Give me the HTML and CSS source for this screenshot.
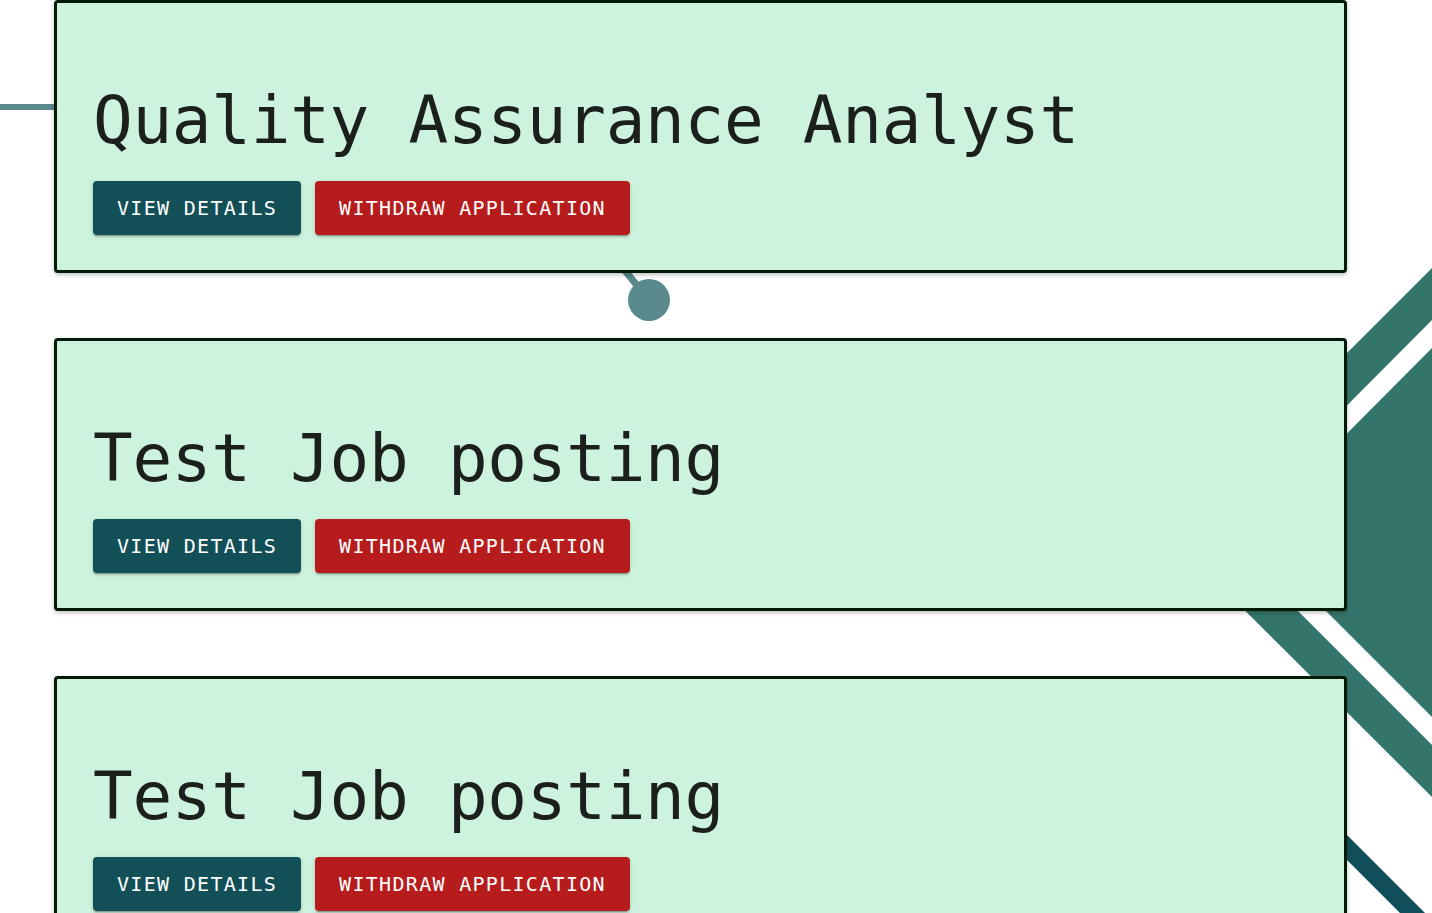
FILE: index.html
```html
<!DOCTYPE html>
<html lang="en">
<head>
<meta charset="utf-8">
<title>Applications</title>
<link rel="stylesheet" href="styles.css">
</head>
<body>
<svg class="decor" width="1432" height="913" viewBox="0 0 1432 913" aria-hidden="true">
  <line x1="0" y1="107" x2="80" y2="107" stroke="#5a8a8b" stroke-width="6"/>
  <line x1="590" y1="228" x2="649" y2="300" stroke="#5a8a8b" stroke-width="7"/>
  <circle cx="649" cy="300" r="21" fill="#5a8a8b"/>
  <polygon points="1432,268 1167,533 1432,797" fill="#34756b"/>
  <polygon points="1432,320 1220,533 1432,745" fill="#ffffff"/>
  <polygon points="1432,348 1248,533 1432,717" fill="#34756b"/>
  <polygon points="1250,738 1460,948 1460,973 1250,763" fill="#104f59"/>
</svg>
<main class="list">
  <section class="card">
    <h2 class="title">Quality Assurance Analyst</h2>
    <div class="actions">
      <button class="btn btn-view">View Details</button>
      <button class="btn btn-withdraw">Withdraw Application</button>
    </div>
  </section>
  <section class="card">
    <h2 class="title">Test Job posting</h2>
    <div class="actions">
      <button class="btn btn-view">View Details</button>
      <button class="btn btn-withdraw">Withdraw Application</button>
    </div>
  </section>
  <section class="card">
    <h2 class="title">Test Job posting</h2>
    <div class="actions">
      <button class="btn btn-view">View Details</button>
      <button class="btn btn-withdraw">Withdraw Application</button>
    </div>
  </section>
</main>
</body>
</html>
```
FILE: styles.css
```css
html, body {
  margin: 0;
  padding: 0;
  background: #ffffff;
  overflow: hidden;
  height: 913px;
}

body {
  position: relative;
  font-family: "DejaVu Sans Mono", "Liberation Mono", monospace;
}

.decor {
  position: absolute;
  left: 0;
  top: 0;
  z-index: 0;
}

.list {
  position: relative;
  z-index: 1;
  display: flex;
  flex-direction: column;
  gap: 65px;
  padding-left: 54px;
}

.card {
  width: 1293px;
  box-sizing: border-box;
  background: #cdf3de;
  border: 3px solid #031a06;
  border-radius: 4px;
  box-shadow: 0 2px 4px rgba(0, 0, 0, 0.25);
  padding: 78px 36px 35px;
}

.title {
  margin: 0 0 21px;
  font-family: "DejaVu Sans Mono", "Liberation Mono", monospace;
  font-weight: 400;
  font-size: 66px;
  letter-spacing: -0.3px;
  line-height: 79px;
  color: #1c201c;
  white-space: nowrap;
}

.actions {
  display: flex;
  gap: 14px;
}

.btn {
  height: 54px;
  padding: 0 24px;
  border: none;
  border-radius: 4px;
  font-family: "DejaVu Sans Mono", "Liberation Mono", monospace;
  font-size: 20px;
  letter-spacing: 1.3px;
  text-transform: uppercase;
  color: #ffffff;
  box-shadow: 0 3px 1px -2px rgba(0,0,0,0.2), 0 2px 2px 0 rgba(0,0,0,0.14), 0 1px 5px 0 rgba(0,0,0,0.12);
  cursor: pointer;
}

.btn-view {
  background: #124f57;
}

.btn-withdraw {
  background: #b71c1c;
}
```
